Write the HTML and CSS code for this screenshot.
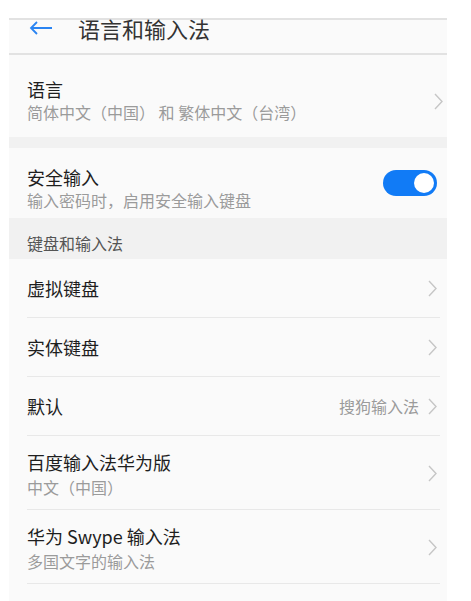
FILE: index.html
```html
<!DOCTYPE html>
<html lang="zh-CN">
  <head>
    <meta charset="utf-8" />
    <title>语言和输入法</title>
    <link rel="stylesheet" href="styles.css">
  </head>
  <body>
    <div class="phone">
      <div class="titlebar">
        <svg class="back" width="24" height="14" viewBox="0 0 24 14">
          <path d="M23 7H2M8 1L2 7l6 6" fill="none" stroke="#2a84f2" stroke-width="1.8"/>
        </svg>
        <span class="title">语言和输入法</span>
      </div>

      <div class="card lang">
        <div class="text">
          <div class="name">语言</div>
          <div class="sub">简体中文（中国） 和 繁体中文（台湾）</div>
        </div>
        <svg class="chev" width="9" height="17" viewBox="0 0 9 17"><polyline points="1,1 8,8.5 1,16"/></svg>
      </div>

      <div class="gap"></div>

      <div class="card secure">
        <div class="text">
          <div class="name">安全输入</div>
          <div class="sub">输入密码时，启用安全输入键盘</div>
        </div>
        <div class="toggle"><div class="knob"></div></div>
      </div>

      <div class="section">键盘和输入法</div>

      <div class="list">
        <div class="row">
          <div class="name">虚拟键盘</div>
          <svg class="chev" width="9" height="17" viewBox="0 0 9 17"><polyline points="1,1 8,8.5 1,16"/></svg>
        </div>
        <div class="row">
          <div class="name">实体键盘</div>
          <svg class="chev" width="9" height="17" viewBox="0 0 9 17"><polyline points="1,1 8,8.5 1,16"/></svg>
        </div>
        <div class="row">
          <div class="name">默认</div>
          <span class="value">搜狗输入法</span>
          <svg class="chev" width="9" height="17" viewBox="0 0 9 17"><polyline points="1,1 8,8.5 1,16"/></svg>
        </div>
        <div class="row tall">
          <div class="text">
            <div class="name">百度输入法华为版</div>
            <div class="sub">中文（中国）</div>
          </div>
          <svg class="chev" width="9" height="17" viewBox="0 0 9 17"><polyline points="1,1 8,8.5 1,16"/></svg>
        </div>
        <div class="row tall">
          <div class="text">
            <div class="name">华为 Swype 输入法</div>
            <div class="sub">多国文字的输入法</div>
          </div>
          <svg class="chev" width="9" height="17" viewBox="0 0 9 17"><polyline points="1,1 8,8.5 1,16"/></svg>
        </div>
        <div class="row tall">
          <div class="text">
            <div class="name">Google 拼音输入法</div>
            <div class="sub">中文（中国）</div>
          </div>
        </div>
      </div>
    </div>
  </body>
</html>
```

FILE: styles.css
```css
html, body {
  margin: 0;
  height: 601px;
  overflow: hidden;
  background: #fff;
  font-family: "Noto Sans CJK SC", "Noto Sans", sans-serif;
}
.phone {
  margin: 18px 0 0 9px;
  width: 438px;
  background: #fafafa;
  min-height: 600px;
}
.titlebar {
  height: 33px;
  border-top: 2px solid #e2e2e2;
  border-bottom: 2px solid #e2e2e2;
  display: flex;
  align-items: flex-start;
}
.back {
  margin: 1px 0 0 20px;
}
.title {
  margin-left: 25px;
  font-size: 22px;
  line-height: 22px;
  margin-top: -3px;
  color: #333;
}
.card {
  display: flex;
  align-items: center;
  padding-left: 18px;
  box-sizing: border-box;
}
.lang {
  height: 82px;
  padding-top: 10px;
}
.secure {
  height: 70px;
  padding-top: 12px;
}
.text {
  flex: 1;
}
.name {
  flex: 1;
  font-size: 18px;
  line-height: 23px;
  color: #1e1e1e;
}
.sub {
  font-size: 16px;
  line-height: 23px;
  color: #9b9b9b;
}
.chev {
  fill: none;
  stroke: #c6c6c6;
  stroke-width: 1.4;
}
.lang .chev {
  margin-right: 4px;
}
.gap {
  height: 11px;
  background: #f1f1f1;
}
.toggle {
  width: 54px;
  height: 26px;
  border-radius: 13px;
  background: #117bf6;
  margin-right: 10px;
  margin-top: -12px;
  position: relative;
}
.knob {
  position: absolute;
  right: 3px;
  top: 3px;
  width: 20px;
  height: 20px;
  border-radius: 50%;
  background: #fff;
}
.section {
  height: 41px;
  background: #f1f1f1;
  padding: 14px 0 0 18px;
  box-sizing: border-box;
  font-size: 16px;
  line-height: 22px;
  color: #555;
}
.list {
  padding: 0 7px 0 18px;
}
.row {
  display: flex;
  align-items: center;
  height: 59px;
  border-bottom: 1px solid #e8e8e8;
  box-sizing: border-box;
  padding-right: 3px;
}
.row.tall {
  height: 74px;
  padding-top: 2px;
}
.row.tall .name {
  line-height: 26px;
}
.row.tall .sub {
  line-height: 24px;
}
.value {
  font-size: 16px;
  color: #9b9b9b;
  margin-right: 9px;
}
```
